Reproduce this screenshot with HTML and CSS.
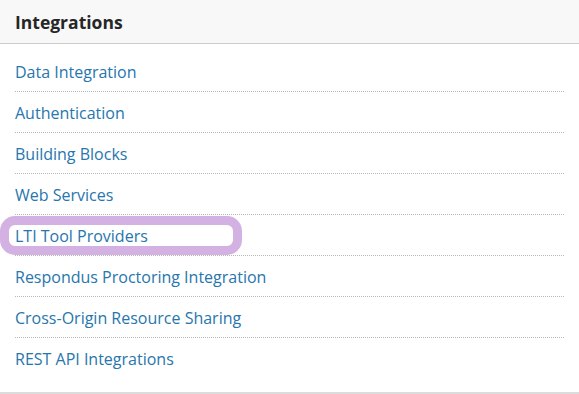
FILE: index.html
```html
<!DOCTYPE html>
<html>
<head>
<meta charset="utf-8">
<link rel="stylesheet" href="styles.css">
</head>
<body>
<div class="panel">
  <div class="panel-header">Integrations</div>
  <ul class="links">
    <li class="item"><a href="#">Data Integration</a></li>
    <li class="item"><a href="#">Authentication</a></li>
    <li class="item"><a href="#">Building Blocks</a></li>
    <li class="item"><a href="#">Web Services</a></li>
    <li class="item highlighted"><a href="#">LTI Tool Providers</a><span class="ring"></span></li>
    <li class="item"><a href="#">Respondus Proctoring Integration</a></li>
    <li class="item"><a href="#">Cross-Origin Resource Sharing</a></li>
    <li class="item last"><a href="#">REST API Integrations</a></li>
  </ul>
</div>
</body>
</html>
```
FILE: styles.css
```css
html, body {
  margin: 0;
  padding: 0;
  background: #fff;
}
body {
  font-family: "Open Sans", "Liberation Sans", sans-serif;
  width: 579px;
  height: 394px;
  overflow: hidden;
}
.panel {
  height: 392px;
  border-bottom: 2px solid #dcdcdc;
}
.panel-header {
  height: 44px;
  box-sizing: border-box;
  background: #f8f8f8;
  border-bottom: 1px solid #cccccc;
  padding-left: 15px;
  font-size: 17.5px;
  font-weight: 700;
  color: #262626;
  line-height: 44px;
}
.links {
  list-style: none;
  margin: 0;
  padding: 7px 15px 0 15px;
}
.item {
  position: relative;
  height: 41px;
  box-sizing: border-box;
  padding-top: 2px;
  border-bottom: 1px dotted #b8b8b8;
  display: flex;
  align-items: center;
}
.item.last {
  border-bottom: none;
  height: 40px;
}
.item a {
  font-size: 16px;
  color: #2776ad;
  text-decoration: none;
  position: relative;
  z-index: 1;
}
.ring {
  position: absolute;
  left: -15px;
  top: 1px;
  width: 242px;
  height: 39px;
  box-sizing: border-box;
  border: 9px solid #d3b1e3;
  border-radius: 15px;
  background: #fff;
}
```
